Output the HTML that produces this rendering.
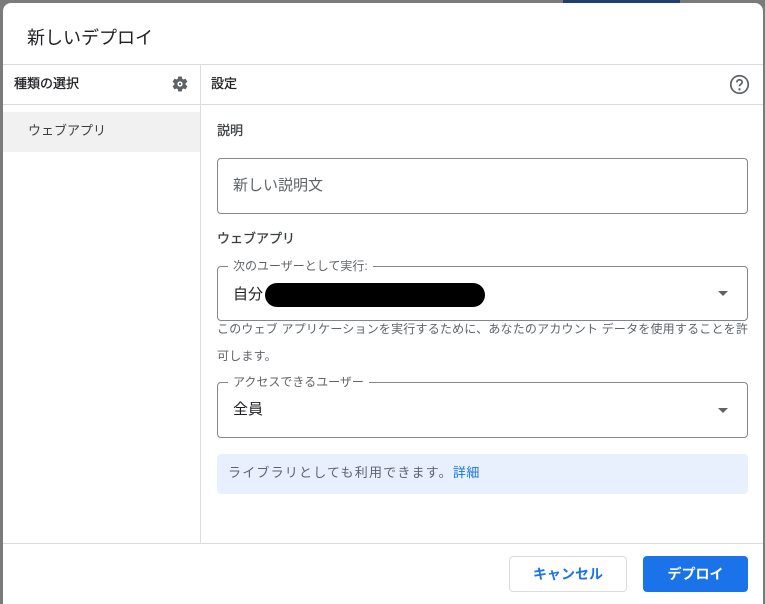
<!DOCTYPE html>
<html><head><meta charset="utf-8"><style>
*{box-sizing:border-box;margin:0;padding:0}
html,body{width:765px;height:604px;overflow:hidden}
body{background:#7b7b7b;font-family:"Liberation Sans","Noto Sans CJK JP",sans-serif;position:relative;color:#202124}
.topbtn{position:absolute;left:563px;top:0;width:117px;height:4px;background:#1f3f6e}
.dlg{position:absolute;left:3px;top:3px;width:760px;height:601px;background:#fff;border-radius:8px 8px 0 0;overflow:hidden}
.a{position:absolute}
.hl{position:absolute;height:1px;background:#dadce0}
.fs{position:absolute;border:1px solid #80868b;border-radius:4px}
.lg{position:absolute;top:-9px;left:10px;background:#fff;padding:0 5px;font-size:12px;color:#5f6368;line-height:16px}
.tri{position:absolute;width:0;height:0;border-left:5px solid transparent;border-right:5px solid transparent;border-top:5px solid #5f6368}
</style></head><body>
<div class="topbtn"></div>
<div class="dlg">
<div class="a" style="left:24px;top:22px;font-size:18px;line-height:26px;color:#202124">新しいデプロイ</div>
<div class="hl" style="left:0;top:61px;width:760px"></div>
<div class="a" style="left:197px;top:62px;width:1px;height:478px;background:#dadce0"></div>
<div class="a" style="left:11px;top:72px;font-size:13px;line-height:18px;color:#202124;-webkit-text-stroke:0.3px #202124">種類の選択</div>
<svg class="a" style="left:168px;top:72px" width="18" height="18" viewBox="0 0 24 24"><path fill="#5f6368" d="M19.4 13c.04-.32.1-.66.1-1s-.03-.68-.07-1l2.1-1.65c.2-.15.24-.42.12-.64l-2-3.46c-.12-.22-.39-.3-.61-.22l-2.49 1c-.52-.4-1.08-.73-1.69-.98l-.38-2.65A.49.49 0 0014 2h-4c-.25 0-.46.18-.49.42l-.38 2.65c-.61.25-1.17.59-1.69.98l-2.49-1c-.23-.09-.49 0-.61.22l-2 3.46c-.13.22-.07.49.12.64L4.57 11c-.04.32-.07.65-.07 1s.03.68.07 1l-2.11 1.65c-.19.15-.24.42-.12.64l2 3.46c.12.22.39.3.61.22l2.49-1c.52.4 1.08.73 1.69.98l.38 2.65c.03.24.24.42.49.42h4c.25 0 .46-.18.49-.42l.38-2.65c.61-.25 1.17-.59 1.69-.98l2.49 1c.23.09.49 0 .61-.22l2-3.46c.12-.22.07-.49-.12-.64L19.4 13zM12 15.5A3.5 3.5 0 1112 8.5a3.5 3.5 0 010 7zm0-2a1.5 1.5 0 100-3 1.5 1.5 0 000 3z" fill-rule="evenodd"/></svg>
<div class="a" style="left:208px;top:72px;font-size:13px;line-height:18px;color:#202124;-webkit-text-stroke:0.3px #202124">設定</div>
<svg class="a" style="left:726px;top:71px" width="21" height="21" viewBox="0 0 24 24"><circle cx="12" cy="12" r="10" fill="none" stroke="#5f6368" stroke-width="2"/><path d="M9 9.5a3 3 0 016 0c0 2-3 2.2-3 4.5" fill="none" stroke="#5f6368" stroke-width="2"/><circle cx="12" cy="17.5" r="1.3" fill="#5f6368"/></svg>
<div class="hl" style="left:0;top:101px;width:760px"></div>
<div class="a" style="left:0;top:109px;width:197px;height:40px;background:#f1f1f1"></div>
<div class="a" style="left:25px;top:119px;font-size:13px;line-height:18px;color:#3c4043">ウェブアプリ</div>
<div class="a" style="left:214px;top:119px;font-size:13px;line-height:18px;color:#3c4043;-webkit-text-stroke:0.3px #3c4043">説明</div>
<div class="fs" style="left:214px;top:155px;width:531px;height:56px"></div>
<div class="a" style="left:230px;top:173px;font-size:15px;line-height:20px;color:#5f6368">新しい説明文</div>
<div class="a" style="left:214px;top:227px;font-size:13px;line-height:18px;color:#3c4043;-webkit-text-stroke:0.3px #3c4043">ウェブアプリ</div>
<div class="fs" style="left:214px;top:263px;width:531px;height:55px"><div class="lg">次のユーザーとして実行:</div><div class="tri" style="right:19px;top:24px"></div></div>
<div class="a" style="left:230px;top:282px;font-size:15px;line-height:20px">自分</div>
<div class="a" style="left:262px;top:280px;width:220px;height:24px;background:#000;border-radius:12px"></div>
<div class="a" style="left:214px;top:313px;width:537px;font-size:12px;line-height:27px;letter-spacing:0.2px;color:#5f6368">このウェブ アプリケーションを実行するために、あなたのアカウント データを使用することを許可します。</div>
<div class="fs" style="left:214px;top:379px;width:531px;height:56px"><div class="lg">アクセスできるユーザー</div><div class="tri" style="right:19px;top:25px"></div></div>
<div class="a" style="left:230px;top:397px;font-size:15px;line-height:20px">全員</div>
<div class="a" style="left:214px;top:451px;width:531px;height:40px;background:#e8f0fe;border-radius:4px"></div>
<div class="a" style="left:225px;top:461px;font-size:13px;line-height:18px;letter-spacing:1.2px;color:#5f6368">ライブラリとしても利用できます。<span style="color:#1a73e8;letter-spacing:0.5px">詳細</span></div>
<div class="hl" style="left:0;top:540px;width:760px"></div>
<div class="a" style="left:506px;top:553px;width:118px;height:36px;border:1px solid #dadce0;border-radius:4px;color:#1a73e8;font-size:14px;font-weight:bold;text-align:center;line-height:34px">キャンセル</div>
<div class="a" style="left:640px;top:553px;width:105px;height:36px;background:#1a73e8;border-radius:4px;color:#fff;font-size:14px;font-weight:bold;text-align:center;line-height:36px">デプロイ</div>
</div>
</body></html>
